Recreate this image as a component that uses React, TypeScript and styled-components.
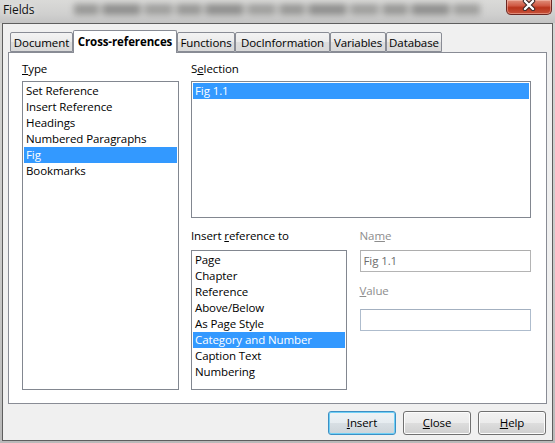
import React from 'react';
import styled, { createGlobalStyle } from 'styled-components';

const GlobalStyle = createGlobalStyle`
  html, body {
    margin: 0;
    padding: 0;
    background: #c8c8c8;
  }
  body {
    font-family: "Open Sans", "Noto Sans", "Liberation Sans", sans-serif;
    font-size: 11.5px;
    letter-spacing: -0.1px;
    color: #000;
  }
`;

const Window = styled.div`
  width: 555px;
  height: 443px;
  display: flex;
  flex-direction: column;
  background: linear-gradient(180deg, #d6d6d4 0%, #c9c9c8 60%, #b9b9b9 100%);
  overflow: hidden;
`;

const TitleBar = styled.div`
  height: 23px;
  display: flex;
  align-items: flex-start;
  padding-left: 3px;
  background: linear-gradient(180deg, #dadad8 0%, #d0d0cf 60%, #c4c4c4 100%);
`;

const Title = styled.div`
  line-height: 20px;
  font-size: 12px;
  color: #111;
  text-shadow: 0 0 6px #f4f4f4;
`;

const BackdropBlur = styled.div`
  flex: 1;
  height: 11px;
  margin: 4px 26px 0 40px;
  background: repeating-linear-gradient(
    90deg,
    #8a8a88 0 24px,
    #bdbdbb 24px 29px,
    #7f7f7e 29px 66px,
    #c2c2c0 66px 71px,
    #939391 71px 98px,
    #c4c4c2 98px 103px
  );
  filter: blur(3px);
  opacity: 0.8;
`;

const CloseButton = styled.div`
  width: 46px;
  height: 15px;
  margin-right: 3px;
  box-sizing: border-box;
  border: 1px solid #6b2722;
  border-top: none;
  border-radius: 0 0 5px 5px;
  background: linear-gradient(180deg, #e08f7c 0%, #d05a45 40%, #b9341c 55%, #c8523a 100%);
  box-shadow: inset 0 0 0 1px rgba(255, 210, 200, 0.45);
  display: flex;
  justify-content: center;
  align-items: flex-start;
`;

const Client = styled.div`
  flex: 1;
  margin: 0 2px 2px 2px;
  border: 1px solid #5e5e5e;
  background: #f0f0f0;
  display: flex;
  flex-direction: column;
  padding: 6px 5px 5px 5px;
`;

const TabStrip = styled.div`
  height: 22px;
  display: flex;
  align-items: flex-end;
  padding-left: 2px;
  position: relative;
  z-index: 1;
`;

const Tab = styled.div<{ $active?: boolean; $w: number }>`
  box-sizing: border-box;
  width: ${({ $w }) => $w}px;
  height: ${({ $active }) => ($active ? 23 : 20)}px;
  margin-bottom: ${({ $active }) => ($active ? -1 : 0)}px;
  border: 1px solid #898c95;
  border-bottom: ${({ $active }) => ($active ? 'none' : '1px solid #898c95')};
  border-radius: 2px 2px 0 0;
  background: ${({ $active }) =>
    $active ? '#ffffff' : 'linear-gradient(180deg, #f3f3f3 0%, #ebebeb 50%, #dedede 51%, #d9d9d9 100%)'};
  font-weight: ${({ $active }) => ($active ? 700 : 400)};
  display: flex;
  align-items: center;
  justify-content: center;
  padding-bottom: ${({ $active }) => ($active ? 2 : 0)}px;
  white-space: nowrap;
`;

const Panel = styled.div`
  height: 352px;
  box-sizing: border-box;
  border: 1px solid #898c95;
  background: #ffffff;
  display: flex;
  gap: 12px;
  padding: 8px 13px 13px 13px;
`;

const Column = styled.div<{ $w?: number }>`
  display: flex;
  flex-direction: column;
  width: ${({ $w }) => ($w ? `${$w}px` : 'auto')};
`;

const Label = styled.div<{ $disabled?: boolean; $gap?: number; $top?: number }>`
  line-height: 16px;
  height: 16px;
  margin-top: ${({ $top }) => $top ?? 0}px;
  margin-bottom: ${({ $gap }) => $gap ?? 4}px;
  color: ${({ $disabled }) => ($disabled ? '#8d8d8d' : '#000')};
  white-space: nowrap;
`;

const U = styled.span`
  text-decoration: underline;
`;

const ListBox = styled.div<{ $h?: number }>`
  box-sizing: border-box;
  border: 1px solid #828790;
  background: #ffffff;
  padding: 1px;
  ${({ $h }) => ($h ? `height: ${$h}px;` : 'flex: 1;')}
`;

const Item = styled.div<{ $selected?: boolean }>`
  height: 16px;
  line-height: 16px;
  padding-left: 2px;
  white-space: nowrap;
  overflow: hidden;
  background: ${({ $selected }) => ($selected ? '#3399ff' : 'transparent')};
  color: ${({ $selected }) => ($selected ? '#ffffff' : '#000')};
`;

const LowerRow = styled.div`
  flex: 1;
  display: flex;
  gap: 13px;
  margin-top: 10px;
`;

const TextField = styled.div<{ $enabled?: boolean }>`
  box-sizing: border-box;
  height: 22px;
  border: 1px solid ${({ $enabled }) => ($enabled ? '#aebccd' : '#b4b4b4')};
  border-top-color: ${({ $enabled }) => ($enabled ? '#a3b0c0' : '#adadad')};
  background: #ffffff;
  color: #6d6d6d;
  line-height: 20px;
  padding-left: 3px;
`;

const ButtonRow = styled.div`
  display: flex;
  justify-content: flex-end;
  gap: 7px;
  margin-top: 7px;
  padding-right: 1px;
`;

const Button = styled.div<{ $default?: boolean }>`
  box-sizing: border-box;
  width: 68px;
  height: 24px;
  border: 1px solid ${({ $default }) => ($default ? '#3c8fc4' : '#707070')};
  border-radius: 3px;
  background: ${({ $default }) =>
    $default
      ? 'linear-gradient(180deg, #eef3f6 0%, #e6ecf0 50%, #d8dfe4 51%, #cdd4d9 100%)'
      : 'linear-gradient(180deg, #f2f2f2 0%, #ebebeb 50%, #dddddd 51%, #cfcfcf 100%)'};
  box-shadow: inset 0 0 0 1px ${({ $default }) => ($default ? '#6fd0f6' : '#fcfcfc')};
  display: flex;
  align-items: center;
  justify-content: center;
  line-height: 16px;
`;

const typeItems = ['Set Reference', 'Insert Reference', 'Headings', 'Numbered Paragraphs', 'Fig', 'Bookmarks'];
const refItems = [
  'Page',
  'Chapter',
  'Reference',
  'Above/Below',
  'As Page Style',
  'Category and Number',
  'Caption Text',
  'Numbering',
];
const tabs = [
  { label: 'Document', w: 63 },
  { label: 'Cross-references', w: 104, active: true },
  { label: 'Functions', w: 58 },
  { label: 'DocInformation', w: 95 },
  { label: 'Variables', w: 56 },
  { label: 'Database', w: 56 },
];

function CloseGlyph() {
  return (
    <svg width="16" height="11" viewBox="0 0 16 11">
      <path d="M4 1 L12 9 M12 1 L4 9" stroke="#3a2626" strokeWidth="4.4" strokeLinecap="round" />
      <path d="M4 1 L12 9 M12 1 L4 9" stroke="#ffffff" strokeWidth="2.4" strokeLinecap="round" />
    </svg>
  );
}

export default function App() {
  return (
    <>
      <GlobalStyle />
      <Window>
        <TitleBar>
          <Title>Fields</Title>
          <BackdropBlur />
          <CloseButton>
            <CloseGlyph />
          </CloseButton>
        </TitleBar>
        <Client>
          <TabStrip>
            {tabs.map((t) => (
              <Tab key={t.label} $active={t.active} $w={t.w}>
                {t.label}
              </Tab>
            ))}
          </TabStrip>
          <Panel>
            <Column $w={157}>
              <Label>
                <U>T</U>ype
              </Label>
              <ListBox>
                {typeItems.map((it) => (
                  <Item key={it} $selected={it === 'Fig'}>
                    {it}
                  </Item>
                ))}
              </ListBox>
            </Column>
            <Column $w={340}>
              <Label>
                S<U>e</U>lection
              </Label>
              <ListBox $h={137}>
                <Item $selected>Fig 1.1</Item>
              </ListBox>
              <LowerRow>
                <Column $w={156}>
                  <Label $gap={6}>
                    Insert <U>r</U>eference to
                  </Label>
                  <ListBox>
                    {refItems.map((it) => (
                      <Item key={it} $selected={it === 'Category and Number'}>
                        {it}
                      </Item>
                    ))}
                  </ListBox>
                </Column>
                <Column $w={172}>
                  <Label $disabled $gap={6}>
                    Na<U>m</U>e
                  </Label>
                  <TextField>Fig 1.1</TextField>
                  <Label $disabled $gap={10} $top={11}>
                    <U>V</U>alue
                  </Label>
                  <TextField $enabled />
                </Column>
              </LowerRow>
            </Column>
          </Panel>
          <ButtonRow>
            <Button $default>
              <span>
                <U>I</U>nsert
              </span>
            </Button>
            <Button>
              <span>
                <U>C</U>lose
              </span>
            </Button>
            <Button>
              <span>
                <U>H</U>elp
              </span>
            </Button>
          </ButtonRow>
        </Client>
      </Window>
    </>
  );
}
